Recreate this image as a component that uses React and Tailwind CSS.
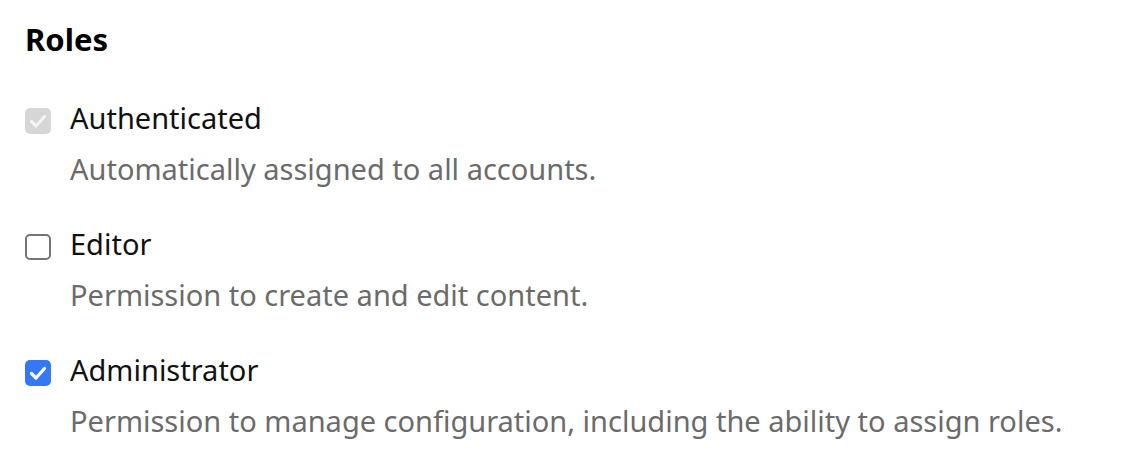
import React from "react";

function Check({ color }) {
  return (
    <svg viewBox="0 0 26 26" className="w-[26px] h-[26px]">
      <path d="M6.5 13.5 L11 18 L19.5 8.5" fill="none" stroke={color} strokeWidth="3.2" strokeLinecap="round" strokeLinejoin="round" />
    </svg>
  );
}

function Box({ state }) {
  if (state === "disabled") {
    return (
      <div className="w-[26px] h-[26px] rounded-[5px] bg-[#d6d6d6] flex items-center justify-center">
        <Check color="#f4f4f4" />
      </div>
    );
  }
  if (state === "checked") {
    return (
      <div className="w-[26px] h-[26px] rounded-[5px] bg-[#3478f6] flex items-center justify-center">
        <Check color="#ffffff" />
      </div>
    );
  }
  return <div className="w-[26px] h-[26px] rounded-[5px] border-2 border-[#767676] bg-white" />;
}

const roles = [
  { label: "Authenticated", desc: "Automatically assigned to all accounts.", state: "disabled" },
  { label: "Editor", desc: "Permission to create and edit content.", state: "unchecked" },
  { label: "Administrator", desc: "Permission to manage configuration, including the ability to assign roles.", state: "checked" },
];

export default function App() {
  return (
    <div className="w-[1126px] h-[468px] bg-white px-[25px] pt-[19px]" style={{ fontFamily: '"Noto Sans", sans-serif' }}>
      <h2 className="text-[31px] font-bold leading-[40px] text-black">Roles</h2>
      <div className="mt-[39px] flex flex-col gap-[35px]">
        {roles.map((r) => (
          <div key={r.label} className="flex gap-[19px]">
            <div className="pt-[10px]">
              <Box state={r.state} />
            </div>
            <div className="flex flex-col gap-[11px]">
              <div className="text-[29px] leading-[40px] text-[#111]">{r.label}</div>
              <div className="text-[29px] leading-[40px] text-[#6b6b6b]">{r.desc}</div>
            </div>
          </div>
        ))}
      </div>
    </div>
  );
}
